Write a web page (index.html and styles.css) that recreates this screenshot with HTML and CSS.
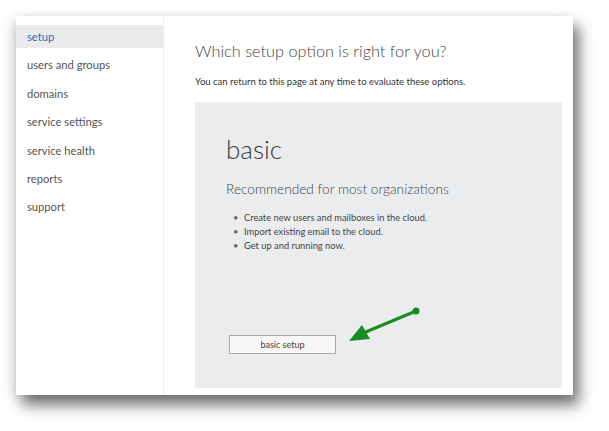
FILE: index.html
```html
<!DOCTYPE html>
<html lang="en">
<head>
  <meta charset="UTF-8">
  <title>setup</title>
  <link rel="stylesheet" href="styles.css">
</head>
<body>
  <div class="frame">
    <nav class="sidebar">
      <a class="nav-item active">setup</a>
      <a class="nav-item">users and groups</a>
      <a class="nav-item">domains</a>
      <a class="nav-item">service settings</a>
      <a class="nav-item">service health</a>
      <a class="nav-item">reports</a>
      <a class="nav-item">support</a>
    </nav>

    <main class="content">
      <h1>Which setup option is right for you?</h1>
      <p class="intro">You can return to this page at any time to evaluate these options.</p>

      <section class="option">
        <h2>basic</h2>
        <p class="option-sub">Recommended for most organizations</p>
        <ul class="option-list">
          <li>Create new users and mailboxes in the cloud.</li>
          <li>Import existing email to the cloud.</li>
          <li>Get up and running now.</li>
        </ul>
        <button class="btn">basic setup</button>

        <!-- annotation arrow -->
        <svg class="arrow" width="80" height="42" viewBox="0 0 80 42">
          <line x1="71" y1="6" x2="16" y2="29" stroke="#1b8a1f" stroke-width="3" stroke-linecap="round"/>
          <circle cx="71" cy="6" r="3.5" fill="#1b8a1f"/>
          <polygon points="4,36 17,20 25,34" fill="#1b8a1f"/>
        </svg>
      </section>
    </main>
  </div>
</body>
</html>
```

FILE: styles.css
```css
* {
  box-sizing: border-box;
  margin: 0;
  padding: 0;
}

html,
body {
  height: 100%;
}

body {
  background-color: #fff;
  font-family: Lato, "Open Sans", sans-serif;
  padding: 16px 0 0 16px;
  overflow: hidden;
}

.frame {
  width: 557px;
  height: 379px;
  display: flex;
  background-color: #fff;
  box-shadow: 6px 10px 14px rgba(0, 0, 0, 0.55), -4px 2px 12px rgba(0, 0, 0, 0.1);
}

.sidebar {
  width: 148px;
  padding-top: 9px;
  border-right: 1px solid #ececec;
  display: flex;
  flex-direction: column;
  gap: 5.4px;
}

.nav-item {
  display: block;
  height: 23px;
  line-height: 23px;
  padding-left: 11px;
  font-size: 11.2px;
  color: #555;
}

.nav-item.active {
  background-color: #ebebed;
  color: #2b6eb4;
}

.content {
  flex: 1;
  display: flex;
  flex-direction: column;
  padding: 0 11px 7px 31px;
}

h1 {
  margin-top: 23px;
  font-size: 16.3px;
  font-weight: 300;
  color: #444;
  line-height: 24px;
}

.intro {
  margin-top: 13px;
  font-size: 9.5px;
  color: #333;
  line-height: 12px;
}

.option {
  position: relative;
  flex: 1;
  margin-top: 14px;
  background-color: #ebecee;
  padding: 29px 0 34px 31px;
  display: flex;
  flex-direction: column;
  align-items: flex-start;
}

h2 {
  font-size: 26px;
  font-weight: 300;
  color: #3a3a3a;
  line-height: 36px;
}

.option-sub {
  margin-top: 12px;
  font-size: 13.7px;
  font-weight: 300;
  color: #444;
  line-height: 20px;
}

.option-list {
  margin-top: 12px;
  padding-left: 18px;
  list-style: none;
}

.option-list li {
  position: relative;
  font-size: 9.3px;
  line-height: 14px;
  color: #444;
}

.option-list li::before {
  content: "\2022";
  position: absolute;
  left: -11px;
  color: #666;
}

.btn {
  margin-top: auto;
  margin-left: 3px;
  width: 107px;
  height: 19px;
  background-color: #f7f7f7;
  border: 1px solid #a9a9a9;
  font-family: inherit;
  font-size: 9px;
  color: #444;
  cursor: pointer;
}

.arrow {
  position: absolute;
  left: 150px;
  top: 203px;
}
```
